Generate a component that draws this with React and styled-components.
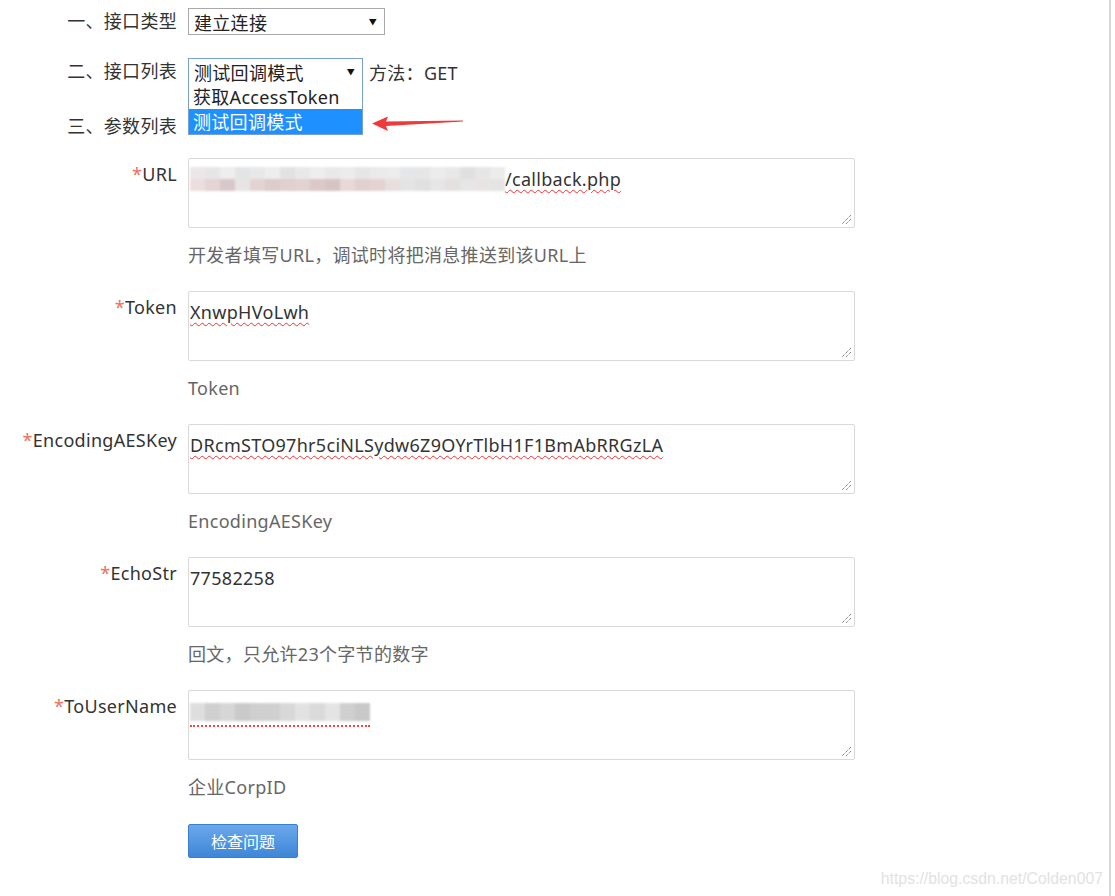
import { createGlobalStyle } from 'styled-components'
import styled from 'styled-components'

const GlobalStyle = createGlobalStyle`
  html, body {
    margin: 0;
    padding: 0;
    background: #fff;
  }
  body {
    font-family: "Noto Sans", "Noto Sans CJK SC", sans-serif;
    color: #333;
    letter-spacing: 0.3px;
  }
`

const Page = styled.div`
  position: relative;
  width: 1111px;
  height: 896px;
  border-right: 2px solid #d6d6d6;
  box-sizing: border-box;
  overflow: hidden;
`

const Form = styled.div`
  display: grid;
  grid-template-columns: 177px 1fr;
  column-gap: 11px;
  padding-top: 8px;
`

const Label = styled.div`
  text-align: right;
  font-size: 18px;
  line-height: 27px;
  color: #333;
  padding-top: ${(p) => p.$pt || 0}px;
  margin-top: ${(p) => p.$mt || 0}px;
  white-space: nowrap;
`

const Star = styled.span`
  color: #ef6e5e;
`

const Cell = styled.div`
  margin-top: ${(p) => p.$mt || 0}px;
  display: flex;
  align-items: center;
  gap: 6px;
  position: relative;
`

const SelectBox = styled.div`
  width: ${(p) => p.$w}px;
  height: 27px;
  box-sizing: border-box;
  border: 1px solid ${(p) => (p.$focus ? '#7a9ed2' : '#a9a9a9')};
  display: flex;
  align-items: center;
  justify-content: space-between;
  padding: 0 7px 0 5px;
  font-size: 18px;
  color: #222;
  background: #fff;
`

const Caret = styled.span`
  font-size: 8px;
  color: #111;
`

const Method = styled.span`
  font-size: 18px;
  color: #333;
`

const Menu = styled.div`
  position: absolute;
  left: 0;
  top: 26px;
  width: 175px;
  box-sizing: border-box;
  border: 1px solid #7a9ed2;
  border-top: none;
  background: #fff;
  z-index: 2;
`

const MenuItem = styled.div`
  height: 25px;
  line-height: 26px;
  padding-left: 4px;
  font-size: 18px;
  background: ${(p) => (p.$active ? '#1e90ff' : '#fff')};
  color: ${(p) => (p.$active ? '#fff' : '#222')};
`

const Arrow = styled.svg`
  position: absolute;
  left: 184px;
  top: 58px;
`

const Field = styled.div`
  margin-top: ${(p) => p.$mt || 0}px;
`

const Area = styled.div`
  position: relative;
  width: 667px;
  height: 70px;
  box-sizing: border-box;
  border: 1px solid #d9d9d9;
  border-radius: 2px;
  padding: 8px 1px 0;
  font-size: 18px;
  line-height: 24px;
  color: #333;
`

const Grip = styled.svg`
  position: absolute;
  right: 2px;
  bottom: 2px;
`

const Wavy = styled.span`
  text-decoration: underline wavy #e33;
  text-decoration-thickness: 1px;
  text-underline-offset: 3px;
`

const Blur = styled.span`
  display: inline-flex;
  flex-direction: column;
  vertical-align: middle;
  filter: blur(1.2px);
  margin-top: -4px;
`

const UnderBlur = styled.span`
  display: inline-block;
  vertical-align: middle;
  border-bottom: 2px dotted #e44;
  padding-bottom: 1px;
`

const BlurRow = styled.span`
  display: flex;
`

const Pix = styled.span`
  width: 15px;
  height: ${(p) => p.$h || 11}px;
  background: ${(p) => p.$c};
`

const Hint = styled.div`
  margin-top: 15px;
  font-size: 18px;
  line-height: 24px;
  color: #666;
`

const Button = styled.button`
  margin-top: 25px;
  width: 110px;
  height: 34px;
  border: 1px solid #3a7fce;
  border-radius: 2px;
  background: linear-gradient(#6ba8ec, #3e86d7);
  color: #fff;
  font-family: "Noto Sans CJK SC", sans-serif;
  font-size: 16px;
  padding: 0;
`

const Watermark = styled.div`
  position: absolute;
  right: 6px;
  bottom: 8px;
  font-family: "Liberation Sans", Arial, sans-serif;
  font-size: 15.8px;
  letter-spacing: 0;
  color: #e2e2e2;
`

const urlTop = ['#ebe7e7', '#e6e6e8', '#eeeeee', '#e2e4e6', '#e8e8e8', '#ededed', '#e4e2e0', '#e8e8ea', '#eeeeee', '#e9e9e9', '#ececec', '#e6e6e6', '#eaeaea', '#ececec', '#e4e6e8', '#e6e6e6', '#ececec', '#e8e8e8', '#e0e0e0', '#e6e6e6', '#ececec']
const urlBot = ['#ecdede', '#e4d4d4', '#d8c8cc', '#e6e4e4', '#e2d4d4', '#dccccc', '#e0d0d0', '#e2d2d2', '#dcc8c8', '#d6c4c4', '#e8d8d8', '#e0d0d0', '#e4d2d2', '#e8dede', '#e4e4e4', '#e0e0e0', '#e6e6e6', '#e4e0e0', '#e6e6e6', '#e8e4e4', '#e4e4e4']
const userCols = ['#dedede', '#cfcfcf', '#d6d6d6', '#cacaca', '#cfcfcf', '#d0d0d0', '#d8d8d8', '#e2e2e2', '#dadada', '#e4e4e4', '#cfcfcf', '#c8c8c8']

const Resize = () => (
  <Grip width='11' height='11' viewBox='0 0 11 11'>
    <path d='M10 1 L1 10 M10 5 L5 10' stroke='#555' strokeWidth='1' strokeDasharray='1 1' />
  </Grip>
)

const fields = [
  { label: 'URL', hint: '开发者填写URL，调试时将把消息推送到该URL上', value: 'url' },
  { label: 'Token', hint: 'Token', value: 'XnwpHVoLwh' },
  { label: 'EncodingAESKey', hint: 'EncodingAESKey', value: 'DRcmSTO97hr5ciNLSydw6Z9OYrTlbH1F1BmAbRRGzLA' },
  { label: 'EchoStr', hint: '回文，只允许23个字节的数字', value: '77582258', plain: true },
  { label: 'ToUserName', hint: '企业CorpID', value: 'user' },
]

const renderValue = (f) => {
  if (f.value === 'url') {
    return (
      <>
        <Blur>
          <BlurRow>{urlTop.map((c, i) => <Pix key={i} $c={c} $h={12} />)}</BlurRow>
          <BlurRow>{urlBot.map((c, i) => <Pix key={i} $c={c} $h={12} />)}</BlurRow>
        </Blur>
        <Wavy>/callback.php</Wavy>
      </>
    )
  }
  if (f.value === 'user') {
    return (
      <UnderBlur>
        <Blur>
          <BlurRow>{userCols.map((c, i) => <Pix key={i} $c={c} $h={18} />)}</BlurRow>
        </Blur>
      </UnderBlur>
    )
  }
  return f.plain ? f.value : <Wavy>{f.value}</Wavy>
}

export default function App() {
  return (
    <Page>
      <GlobalStyle />
      <Form>
        <Label>一、接口类型</Label>
        <Cell>
          <SelectBox $w={197}>
            <span>建立连接</span>
            <Caret>▼</Caret>
          </SelectBox>
        </Cell>

        <Label $mt={23}>二、接口列表</Label>
        <Cell $mt={23}>
          <SelectBox $w={175} $focus>
            <span>测试回调模式</span>
            <Caret>▼</Caret>
          </SelectBox>
          <Method>方法：GET</Method>
          <Menu>
            <MenuItem>获取AccessToken</MenuItem>
            <MenuItem $active>测试回调模式</MenuItem>
          </Menu>
          <Arrow width='92' height='16' viewBox='0 0 92 16'>
            <path d='M0 7.5 L16 0.5 L14 5.5 L91 4.5 L91 5.5 L14 10 L16 15 Z' fill='#f03a3a' />
          </Arrow>
        </Cell>

        <Label $mt={28}>三、参数列表</Label>
        <div />

        {fields.map((f, i) => (
          <>
            <Label key={f.label + 'l'} $mt={i === 0 ? 18 : 24} $pt={3}>
              <Star>*</Star>
              {f.label}
            </Label>
            <Field key={f.label + 'f'} $mt={i === 0 ? 18 : 24}>
              <Area>
                {renderValue(f)}
                <Resize />
              </Area>
              <Hint>{f.hint}</Hint>
              {i === fields.length - 1 && <Button>检查问题</Button>}
            </Field>
          </>
        ))}
      </Form>
      <Watermark>https://blog.csdn.net/Colden007</Watermark>
    </Page>
  )
}
